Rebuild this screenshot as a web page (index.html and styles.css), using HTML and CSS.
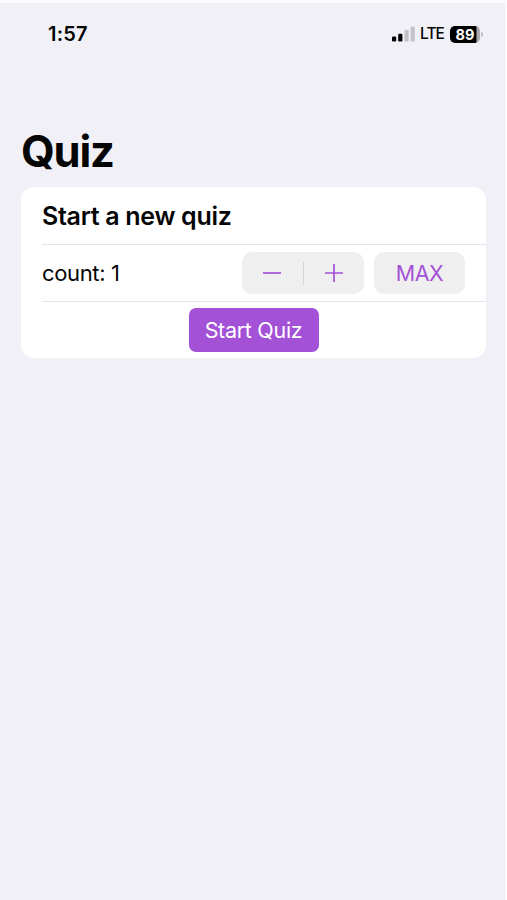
FILE: index.html
```html
<!DOCTYPE html>
<html lang="en">
<head>
<meta charset="utf-8">
<title>Quiz</title>
<link rel="stylesheet" href="styles.css">
</head>
<body>
<div class="screen">
  <header class="status">
    <span class="time">1:57</span>
    <div class="indicators">
      <svg class="signal" width="23" height="16" viewBox="0 0 23 16">
        <rect x="0" y="10.5" width="4.2" height="5" rx="1.2"/>
        <rect x="6.2" y="7.7" width="4.2" height="7.8" rx="1.2"/>
        <rect class="off" x="12.5" y="4" width="4.2" height="11.5" rx="1.2"/>
        <rect class="off" x="18.6" y="0.6" width="4.2" height="14.9" rx="1.2"/>
      </svg>
      <span class="network">LTE</span>
      <span class="battery">89</span>
    </div>
  </header>
  <main>
    <h1>Quiz</h1>
    <section class="card">
      <div class="row"><h2>Start a new quiz</h2></div>
      <div class="row">
        <span class="count">count: 1</span>
        <div class="stepper">
          <button aria-label="Decrease"><svg width="20" height="20" viewBox="0 0 20 20"><path d="M1 10H19"/></svg></button>
          <i class="divider"></i>
          <button aria-label="Increase"><svg width="20" height="20" viewBox="0 0 20 20"><path d="M1 10H19M10 1V19"/></svg></button>
        </div>
        <button class="max">MAX</button>
      </div>
      <div class="row action"><button class="start">Start Quiz</button></div>
    </section>
  </main>
</div>
</body>
</html>
```
FILE: styles.css
```css
* { box-sizing: border-box; }
body {
  margin: 0;
  height: 900px;
  padding: 3px 2px 0 0;
  background: #fcfcfe;
  color: #050506;
  font-family: Inter, "Liberation Sans", sans-serif;
  overflow: hidden;
}
.screen { height: 897px; background: #f1f0f6; }
.status {
  display: flex;
  justify-content: space-between;
  height: 62px;
  padding: 0 25px 0 48px;
}
.time {
  font-size: 20px;
  font-weight: 600;
  line-height: 62px;
  letter-spacing: 0.2px;
}
.indicators { display: flex; align-items: center; }
.signal { margin-right: 5px; }
.signal .off { fill: #c3c2c8; }
.network {
  width: 24px;
  margin-right: 6px;
  font-size: 15.5px;
  font-weight: 500;
  line-height: 18px;
  letter-spacing: -0.9px;
}
.battery {
  position: relative;
  width: 30px;
  height: 17px;
  border-radius: 5px;
  background: linear-gradient(90deg, #000 0 26px, #aaa9af 27px);
  color: #fff;
  font-size: 14.5px;
  font-weight: 700;
  line-height: 17px;
  text-align: center;
}
.battery::after {
  content: "";
  position: absolute;
  left: 31px;
  top: 6px;
  width: 2px;
  height: 5px;
  border-radius: 0 2px 2px 0;
  background: #bdbcc2;
}
main { padding: 61px 19px 0 21px; }
h1, h2 { margin: 0; }
h1 {
  height: 61px;
  font-size: 43.5px;
  font-weight: 700;
  line-height: 51px;
  letter-spacing: -1.2px;
}
.card {
  height: 171px;
  border-radius: 13px;
  background: #fff;
}
.row {
  display: flex;
  align-items: center;
  height: 57px;
  margin-left: 21px;
  padding-right: 21px;
  border-bottom: 1px solid #e4e4e8;
}
.row:first-child { height: 58px; }
.row.action {
  justify-content: center;
  height: 56px;
  margin-left: 0;
  padding: 0;
  border: 0;
}
h2 { font-size: 25px; font-weight: 600; letter-spacing: -0.3px; }
.count { font-size: 22px; letter-spacing: -0.35px; }
button {
  border: 0;
  padding: 0;
  background: none;
  color: #a351d6;
  font: inherit;
}
.stepper, .max {
  height: 42px;
  border-radius: 10px;
  background: #efeff0;
}
.stepper {
  display: flex;
  align-items: center;
  width: 122px;
  margin-left: auto;
  margin-right: 10px;
}
.stepper button { display: flex; flex: 1; justify-content: center; }
.stepper path { stroke: #a351d6; stroke-width: 1.7; }
.divider { width: 1px; height: 23px; background: #d4d4d6; }
.max { width: 91px; font-size: 21.5px; letter-spacing: -0.5px; }
.start {
  width: 130px;
  height: 44px;
  border-radius: 7px;
  background: #a351d6;
  color: #fff;
  font-size: 21.5px;
  letter-spacing: -0.3px;
}
```
